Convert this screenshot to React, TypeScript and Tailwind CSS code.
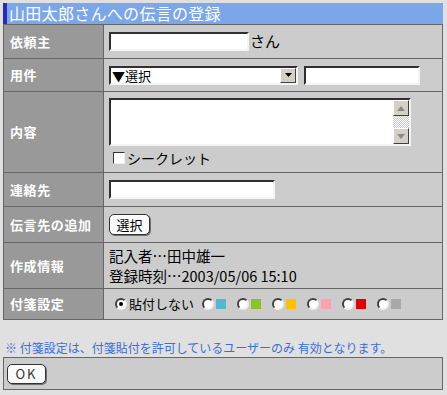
import React from "react";

const FONT = { fontFamily: '"Noto Sans CJK JP", "Noto Sans", sans-serif' };

const inset =
  "bg-white border-2 border-t-[#303030] border-l-[#303030] border-b-[#f4f4f4] border-r-[#f4f4f4]";

function Label({ children }: { children: React.ReactNode }) {
  return (
    <div className="w-[100px] shrink-0 bg-[#999999] border-r border-[#666666] flex items-center pl-[6px] text-white font-bold text-[13px] tracking-[0.6px]">
      {children}
    </div>
  );
}

function Row({
  label,
  h,
  children,
  last,
  valueClass = "",
}: {
  label: string;
  h: string;
  children?: React.ReactNode;
  last?: boolean;
  valueClass?: string;
}) {
  return (
    <div className={`flex ${h} ${last ? "" : "border-b border-[#666666]"}`}>
      <Label>{label}</Label>
      <div className={`flex-1 bg-[#cccccc] flex items-center pl-[5px] ${valueClass}`}>{children}</div>
    </div>
  );
}

function Radio({ checked }: { checked?: boolean }) {
  return (
    <span className="w-[12px] h-[12px] rounded-full bg-white border-2 border-t-[#404040] border-l-[#404040] border-b-[#f0f0f0] border-r-[#f0f0f0] flex items-center justify-center shrink-0">
      {checked && <span className="w-[4px] h-[4px] rounded-full bg-black" />}
    </span>
  );
}

function Swatch({ color }: { color: string }) {
  return (
    <span className="flex items-center gap-[2px] mr-[11px]">
      <Radio />
      <span className={`w-[10px] h-[10px] ${color}`} />
    </span>
  );
}

function ScrollBtn({ up }: { up?: boolean }) {
  return (
    <div className="w-[16px] h-[16px] bg-[#d4d0c8] border border-t-white border-l-white border-b-[#404040] border-r-[#404040] flex items-center justify-center">
      <svg width="8" height="5" viewBox="0 0 8 5">
        {up ? <path d="M0 5 L4 0 L8 5 Z" fill="#8a8a8a" /> : <path d="M0 0 L4 5 L8 0 Z" fill="#8a8a8a" />}
      </svg>
    </div>
  );
}

export default function App() {
  return (
    <div className="w-[447px] h-[395px] bg-[#e0e0e0] p-[3px] pr-[4px]" style={FONT}>
      <div className="h-[21px] bg-[#7ba6e8] border-l-[4px] border-[#2a2ab8] text-white text-[16px] leading-[21px] pl-[2px] tracking-[0.3px]">
        山田太郎さんへの伝言の登録
      </div>
      <div className="border border-[#666666]">
        <Row label="依頼主" h="h-[34px]">
          <div className={`${inset} w-[140px] h-[19px]`} />
          <span className="ml-[1px] text-[15px] text-black">さん</span>
        </Row>
        <Row label="用件" h="h-[33px]">
          <div className={`${inset} w-[189px] h-[19px] flex items-center justify-between`}>
            <span className="text-[13px] leading-none pl-[1px] text-black">▼選択</span>
            <div className="w-[16px] h-[15px] bg-[#d4d0c8] border border-t-white border-l-white border-b-[#404040] border-r-[#404040] flex items-center justify-center">
              <svg width="7" height="4" viewBox="0 0 7 4">
                <path d="M0 0 L3.5 4 L7 0 Z" fill="#000" />
              </svg>
            </div>
          </div>
          <div className={`${inset} w-[116px] h-[19px] ml-[6px]`} />
        </Row>
        <Row label="内容" h="h-[81px]" valueClass="flex-col !items-start justify-start pt-[6px]">
          <div className={`${inset} w-[302px] h-[48px] flex justify-end`}>
            <div className="flex flex-col w-[16px]">
              <ScrollBtn up />
              <div className="flex-1 bg-[repeating-conic-gradient(#ffffff_0_25%,#c8c8c8_0_50%)] bg-[length:2px_2px]" />
              <ScrollBtn />
            </div>
          </div>
          <div className="flex items-center mt-[3px] ml-[4px]">
            <span className="w-[12px] h-[12px] bg-white border border-t-[#333] border-l-[#333] border-b-[#eee] border-r-[#eee]" />
            <span className="text-[14px] text-black ml-[2px] leading-[18px]">シークレット</span>
          </div>
        </Row>
        <Row label="連絡先" h="h-[34px]">
          <div className={`${inset} w-[166px] h-[19px]`} />
        </Row>
        <Row label="伝言先の追加" h="h-[36px]">
          <div className="w-[41px] h-[21px] rounded-[5px] border border-[#333333] bg-[#fafafa] shadow-[1px_1px_0_#707070] flex items-center justify-center text-[13px] text-black">
            選択
          </div>
        </Row>
        <Row label="作成情報" h="h-[46px]" valueClass="pt-[1px]">
          <div className="text-[14.5px] leading-[20px] text-black">
            <div>記入者…田中雄一</div>
            <div>登録時刻…2003/05/06 15:10</div>
          </div>
        </Row>
        <Row label="付箋設定" h="h-[30px]" last valueClass="pl-[11px]">
          <span className="flex items-center mr-[8px]">
            <Radio checked />
            <span className="text-[13px] text-black ml-[2px]">貼付しない</span>
          </span>
          <Swatch color="bg-[#55b7cd]" />
          <Swatch color="bg-[#8fc02a]" />
          <Swatch color="bg-[#ffc000]" />
          <Swatch color="bg-[#ffa0b0]" />
          <Swatch color="bg-[#e00000]" />
          <Swatch color="bg-[#a8a8a8]" />
        </Row>
      </div>
      <div className="h-[37px] flex items-end pb-[1px] pl-[2px] text-[12px] text-[#3c6fd6] leading-[16px]">
        ※ 付箋設定は、付箋貼付を許可しているユーザーのみ 有効となります。
      </div>
      <div className="h-[33px] border border-[#666666] bg-[#cccccc] flex items-center pl-[3px]">
        <div className="w-[39px] h-[20px] rounded-[5px] border border-[#333333] bg-[#fafafa] shadow-[1px_1px_0_#707070] flex items-center justify-center text-[13px] text-[#333] tracking-[2px]">
          OK
        </div>
      </div>
    </div>
  );
}
